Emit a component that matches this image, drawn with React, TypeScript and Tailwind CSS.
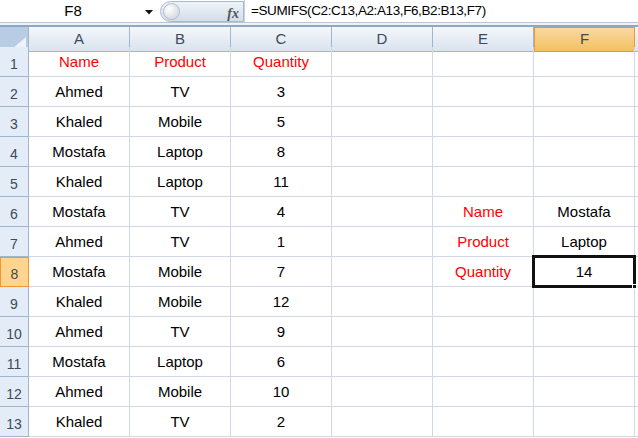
const cols = ["A", "B", "C", "D", "E", "F"];

type Cell = { text: string; red?: boolean };

const data: Record<number, Cell[]> = {
  1: [{ text: "Name", red: true }, { text: "Product", red: true }, { text: "Quantity", red: true }],
  2: [{ text: "Ahmed" }, { text: "TV" }, { text: "3" }],
  3: [{ text: "Khaled" }, { text: "Mobile" }, { text: "5" }],
  4: [{ text: "Mostafa" }, { text: "Laptop" }, { text: "8" }],
  5: [{ text: "Khaled" }, { text: "Laptop" }, { text: "11" }],
  6: [{ text: "Mostafa" }, { text: "TV" }, { text: "4" }, { text: "" }, { text: "Name", red: true }, { text: "Mostafa" }],
  7: [{ text: "Ahmed" }, { text: "TV" }, { text: "1" }, { text: "" }, { text: "Product", red: true }, { text: "Laptop" }],
  8: [{ text: "Mostafa" }, { text: "Mobile" }, { text: "7" }, { text: "" }, { text: "Quantity", red: true }, { text: "14" }],
  9: [{ text: "Khaled" }, { text: "Mobile" }, { text: "12" }],
  10: [{ text: "Ahmed" }, { text: "TV" }, { text: "9" }],
  11: [{ text: "Mostafa" }, { text: "Laptop" }, { text: "6" }],
  12: [{ text: "Ahmed" }, { text: "Mobile" }, { text: "10" }],
  13: [{ text: "Khaled" }, { text: "TV" }, { text: "2" }],
};

const gridCols = "grid grid-cols-[29px_101px_101px_101px_101px_101px_101px_1fr]";

export default function App() {
  const rows = Array.from({ length: 13 }, (_, i) => i + 1);

  return (
    <div className="h-[438px] w-[638px] overflow-hidden bg-white font-['Liberation_Sans',Arial,sans-serif]">
      {/* formula bar */}
      <div className="flex h-[23px] items-center border-b border-[#b8c5d6] bg-white">
        <div className="relative flex h-full w-[160px] items-center justify-center text-[15px] text-black">
          <span className="-ml-[14px]">F8</span>
          <svg className="absolute left-[145px] top-[10px]" width="8" height="5" viewBox="0 0 8 5">
            <path d="M0 0H8L4 4.5Z" fill="#111" />
          </svg>
        </div>
        <div className="relative flex h-[21px] w-[84px] items-center rounded-l-full border border-[#a9b9cd] bg-gradient-to-b from-[#eef3f9] to-[#d3deea]">
          <div className="ml-[2px] h-[17px] w-[17px] rounded-full border border-[#b0bccb] bg-[radial-gradient(circle_at_35%_35%,#ffffff,#c9cfd6)]" />
          <span className="absolute right-[4px] top-[1px] font-['Liberation_Serif',serif] text-[14px] font-bold italic text-[#555]">
            fx
          </span>
        </div>
        <div className="flex h-full flex-1 items-center border-l border-[#c5d1de] pl-[6px] text-[13.5px] tracking-[-0.4px] text-black">
          =SUMIFS(C2:C13,A2:A13,F6,B2:B13,F7)
        </div>
      </div>
      <div className="h-[4px] border-b-2 border-[#8ea7c4] bg-[#eef3f9]" />

      {/* column headers */}
      <div className={`${gridCols} h-[20px]`}>
        <div className="relative border-r border-b border-[#9eb6ce] bg-[#b8cce4]">
          <svg className="absolute bottom-[2px] right-[2px]" width="14" height="12" viewBox="0 0 14 12">
            <path d="M14 0V12H0Z" fill="#eef3f9" />
          </svg>
        </div>
        {cols.map((c) =>
          c === "F" ? (
            <div
              key={c}
              className="flex items-center justify-center border border-[#f29536] bg-gradient-to-b from-[#f9d99f] to-[#f1c15f] text-[15px] text-[#3b4a5c]"
            >
              {c}
            </div>
          ) : (
            <div
              key={c}
              className="flex items-center justify-center border-r border-b border-[#9eb6ce] bg-gradient-to-b from-[#f4f7fb] to-[#dae3ee] text-[15px] text-[#3b4a5c]"
            >
              {c}
            </div>
          )
        )}
        <div className="border-b border-[#9eb6ce] bg-gradient-to-b from-[#f4f7fb] to-[#dae3ee]" />
      </div>

      {/* rows */}
      <div className="relative">
        {rows.map((r) => (
          <div key={r} className={`${gridCols} h-[30px]`}>
            {r === 8 ? (
              <div className="flex items-end justify-center border border-[#f29536] bg-[#ffd58d] pb-[1px] text-[14px] text-[#3b4a5c]">
                {r}
              </div>
            ) : (
              <div className="flex items-end justify-center border-r border-b border-[#9eb6ce] bg-[#e4ecf7] pb-[1px] text-[14px] text-[#3b4a5c]">
                {r}
              </div>
            )}
            {cols.map((c, i) => {
              const cell = data[r][i];
              return (
                <div
                  key={c}
                  className={`flex items-center justify-center border-r border-b border-[#d0d7e5] pt-[2px] text-[15px] ${
                    cell?.red ? "text-[#ff0000]" : "text-black"
                  }`}
                >
                  {cell?.text}
                </div>
              );
            })}
            <div className="border-b border-[#d0d7e5]" />
          </div>
        ))}

        {/* active cell F8 */}
        <div className="pointer-events-none absolute left-[532px] top-[208px] h-[33px] w-[104px] border-[3px] border-[#111]">
          <div className="absolute -bottom-[4px] -right-[4px] h-[5px] w-[5px] border border-white bg-[#111]" />
        </div>
      </div>
    </div>
  );
}
